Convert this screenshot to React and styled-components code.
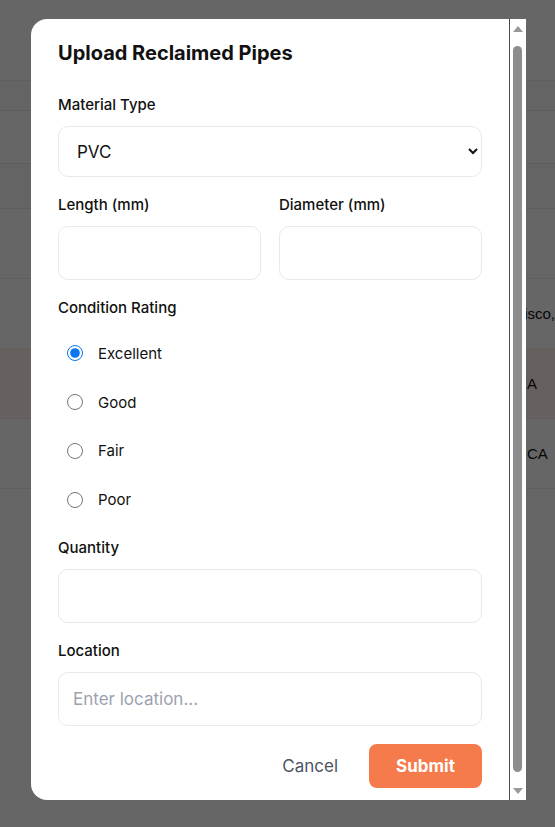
import styled, { createGlobalStyle } from "styled-components";
import { useState } from "react";

const GlobalStyle = createGlobalStyle`
  html, body {
    margin: 0;
    padding: 0;
    overflow: hidden;
  }
  body {
    font-family: "Liberation Sans", Arial, sans-serif;
    background: #ffffff;
  }
`;

const Page = styled.div`
  width: 555px;
  height: 827px;
  position: relative;
  overflow: hidden;
  background: #ffffff;
`;

const Header = styled.div`
  height: 80px;
  border-bottom: 1px solid #eeeeee;
`;

const Band = styled.div`
  height: ${(p) => p.h}px;
  border-bottom: 1px solid #e8e8e8;
  background: ${(p) => p.bg || "#ffffff"};
`;

const Row = styled.div`
  height: 69px;
  display: flex;
  align-items: center;
  border-bottom: 1px solid #eeeeee;
  background: ${(p) => (p.highlight ? "#fff3ec" : "#ffffff")};
  padding-left: ${(p) => p.offset}px;
  font-size: 15px;
  color: #111;
  white-space: nowrap;
`;

const Overlay = styled.div`
  position: absolute;
  inset: 0;
  background: rgba(0, 0, 0, 0.6);
`;

const Modal = styled.div`
  position: absolute;
  top: 19px;
  left: 31px;
  width: 495px;
  height: 781px;
  display: flex;
  background: #ffffff;
  border-radius: 16px 0 0 16px;
  overflow: hidden;
  font-family: Inter, "Noto Sans", sans-serif;
  color: #111111;
`;

const Content = styled.div`
  flex: 1;
  min-width: 0;
  overflow: hidden;
`;

const ScrollTrack = styled.div`
  width: 16px;
  flex-shrink: 0;
  display: flex;
  flex-direction: column;
  align-items: center;
  background: #ffffff;
  border-left: 1px solid #4a4a4a;
`;

const Arrow = styled.div`
  height: 17px;
  width: 100%;
  display: flex;
  align-items: center;
  justify-content: center;
  &::before {
    content: "";
    width: 0;
    height: 0;
    border-left: 5px solid transparent;
    border-right: 5px solid transparent;
    ${(p) =>
      p.direction === "up"
        ? "border-bottom: 6px solid #999999; margin-top: 2px;"
        : "border-top: 6px solid #999999; margin-bottom: 1px;"}
  }
`;

const Thumb = styled.div`
  flex: 1;
  width: 9px;
  margin: 10px 1px 11px 0;
  background: #8d8d8d;
  border-radius: 5px;
`;

const Form = styled.form`
  padding: 20px 27px 24px 27px;
`;

const Title = styled.h2`
  margin: 0 0 28px 0;
  font-size: 20px;
  line-height: 28px;
  font-weight: 700;
`;

const Field = styled.div`
  margin-bottom: 18px;
  flex: 1;
`;

const Label = styled.label`
  display: block;
  font-size: 15px;
  line-height: 20px;
  font-weight: 500;
  margin-bottom: 11px;
  margin-top: ${(p) => p.top || 0}px;
`;

const Select = styled.select`
  width: 100%;
  height: 51px;
  box-sizing: border-box;
  border: 1px solid #e8e9eb;
  border-radius: 10px;
  padding: 0 12px 0 14px;
  font-family: Inter, sans-serif;
  font-size: 17px;
  color: #111;
  background: #fff;
  outline: none;
`;

const Input = styled.input`
  width: 100%;
  height: 54px;
  box-sizing: border-box;
  border: 1px solid #e8e9eb;
  border-radius: 10px;
  padding: 0 14px;
  font-family: Inter, sans-serif;
  font-size: 17px;
  color: #111;
  outline: none;
  &::placeholder {
    color: #9ca3af;
  }
`;

const Pair = styled.div`
  display: flex;
  gap: 18px;
`;

const RadioList = styled.div`
  margin-bottom: 14px;
`;

const RadioRow = styled.label`
  display: flex;
  align-items: center;
  height: 48.75px;
  padding-left: 9px;
  font-size: 15px;
  gap: 15px;
  cursor: pointer;
`;

const Radio = styled.input`
  width: 16px;
  height: 16px;
  margin: 0;
  accent-color: #0b76ef;
`;

const Actions = styled.div`
  display: flex;
  justify-content: flex-end;
  align-items: center;
  gap: 15px;
`;

const CancelButton = styled.button`
  border: none;
  background: transparent;
  font-family: Inter, sans-serif;
  font-size: 17px;
  color: #4b5563;
  padding: 0 16px;
  height: 44px;
  cursor: pointer;
`;

const SubmitButton = styled.button`
  border: none;
  background: #f57b4c;
  color: #ffffff;
  font-family: Inter, sans-serif;
  font-size: 17px;
  font-weight: 700;
  width: 113px;
  height: 44px;
  border-radius: 8px;
  cursor: pointer;
`;

const conditions = ["Excellent", "Good", "Fair", "Poor"];

const rows = [
  { text: "Fresno, CA", offset: 420 },
  { text: "San Francisco, CA", offset: 455 },
  { text: "Oakland, CA", offset: 452, highlight: true },
  { text: "San Jose, CA", offset: 456 },
];

export default function App() {
  const [condition, setCondition] = useState("Excellent");

  return (
    <Page>
      <GlobalStyle />
      <Header />
      <Band h={29} bg="#fafafa" />
      <Band h={52} />
      <Band h={44} bg="#fafafa" />
      {rows.map((r) => (
        <Row key={r.text} offset={r.offset} highlight={r.highlight}>
          {r.text}
        </Row>
      ))}
      <Overlay />
      <Modal>
        <Content>
          <Form onSubmit={(e) => e.preventDefault()}>
            <Title>Upload Reclaimed Pipes</Title>
            <Field>
              <Label top={1}>Material Type</Label>
              <Select defaultValue="PVC">
                <option>PVC</option>
                <option>Copper</option>
                <option>Steel</option>
                <option>Cast Iron</option>
              </Select>
            </Field>
            <Pair>
              <Field>
                <Label>Length (mm)</Label>
                <Input type="number" />
              </Field>
              <Field>
                <Label>Diameter (mm)</Label>
                <Input type="number" />
              </Field>
            </Pair>
            <Label>Condition Rating</Label>
            <RadioList>
              {conditions.map((c) => (
                <RadioRow key={c}>
                  <Radio
                    type="radio"
                    name="condition"
                    checked={condition === c}
                    onChange={() => setCondition(c)}
                  />
                  {c}
                </RadioRow>
              ))}
            </RadioList>
            <Field>
              <Label>Quantity</Label>
              <Input type="number" />
            </Field>
            <Field>
              <Label>Location</Label>
              <Input placeholder="Enter location..." />
            </Field>
            <Actions>
              <CancelButton type="button">Cancel</CancelButton>
              <SubmitButton type="submit">Submit</SubmitButton>
            </Actions>
          </Form>
        </Content>
        <ScrollTrack>
          <Arrow direction="up" />
          <Thumb />
          <Arrow direction="down" />
        </ScrollTrack>
      </Modal>
    </Page>
  );
}
